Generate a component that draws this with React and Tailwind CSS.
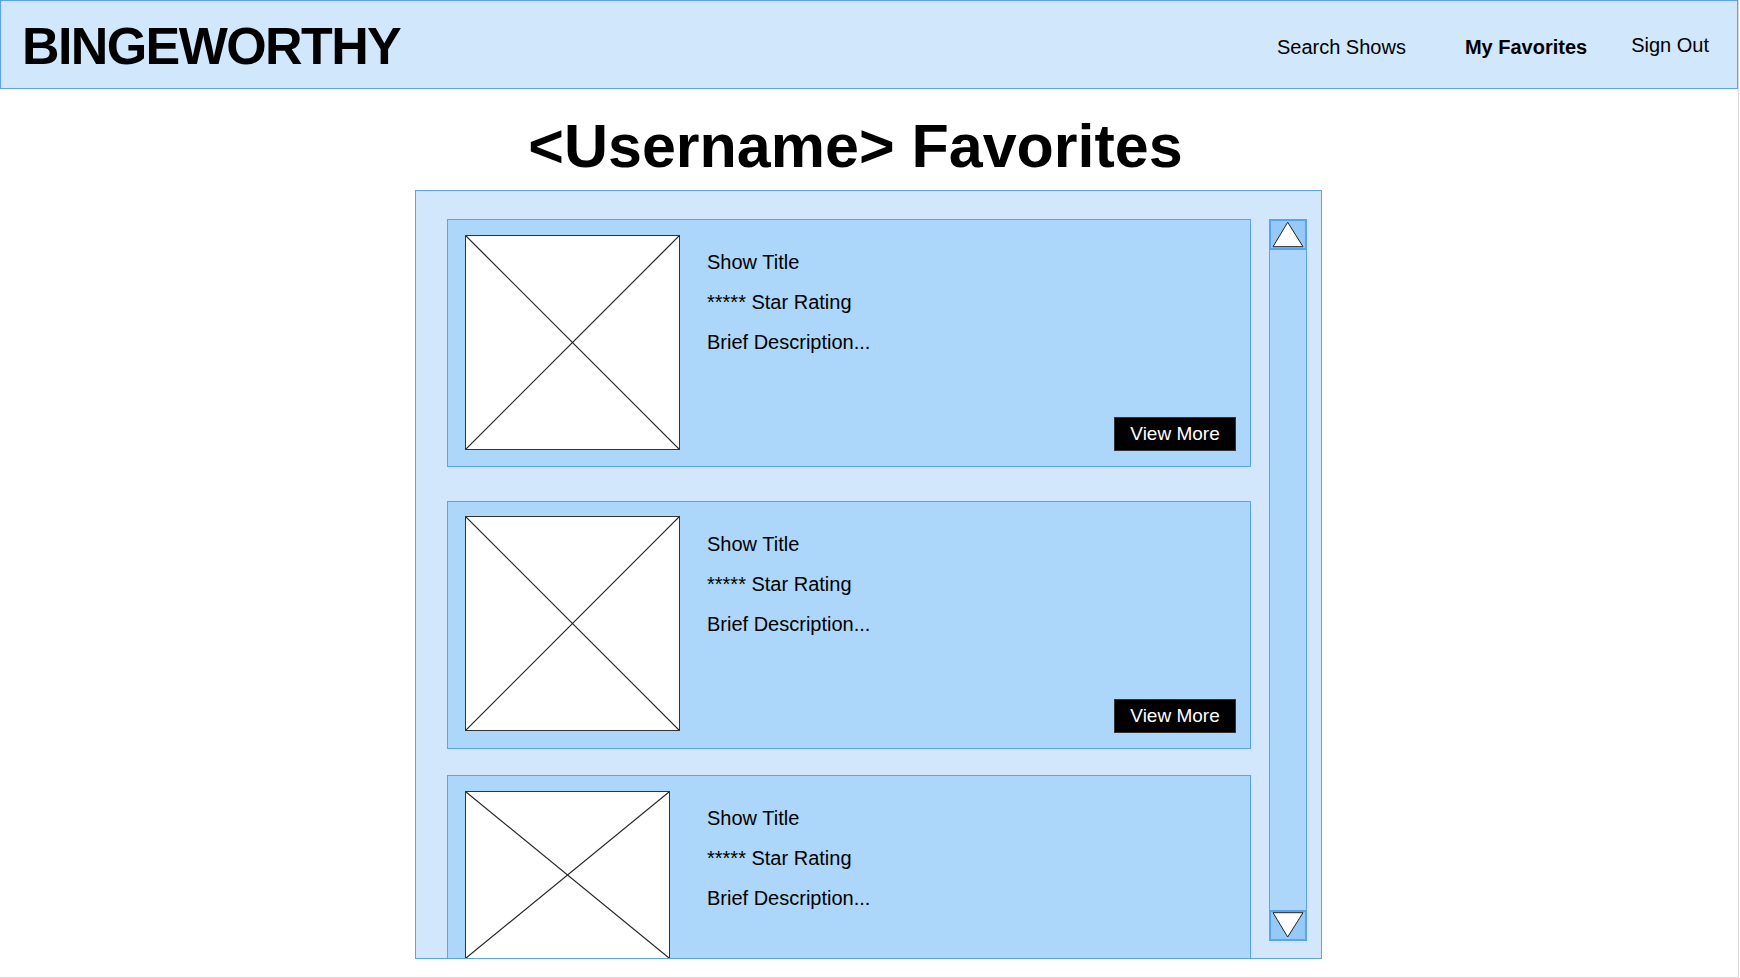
const shows = [
  { id: 1, mt: "mt-0", imgW: "w-[215px]", imgH: "h-[215px]", imgMt: "mt-[15px]", more: true },
  { id: 2, mt: "mt-[34px]", imgW: "w-[215px]", imgH: "h-[215px]", imgMt: "mt-[14px]", more: true },
  { id: 3, mt: "mt-[26px]", imgW: "w-[205px]", imgH: "h-[168px]", imgMt: "mt-[15px]", more: false },
];

const Placeholder = ({ w, h, mt }) => (
  <div className={`relative shrink-0 ${w} ${h} ${mt} border border-[#333] bg-white`}>
    <svg className="absolute inset-0 h-full w-full" preserveAspectRatio="none" viewBox="0 0 100 100">
      <line x1="0" y1="0" x2="100" y2="100" stroke="#222" strokeWidth="1.2" vectorEffect="non-scaling-stroke" />
      <line x1="100" y1="0" x2="0" y2="100" stroke="#222" strokeWidth="1.2" vectorEffect="non-scaling-stroke" />
    </svg>
  </div>
);

const ShowCard = ({ show }) => (
  <div className={`${show.mt} flex h-[248px] w-[804px] shrink-0 border border-[#5aa3f3] bg-[#acd7fa] pl-[17px] pr-[14px] pb-[15px]`}>
    <div className="w-[215px] shrink-0">
      <Placeholder w={show.imgW} h={show.imgH} mt={show.imgMt} />
    </div>
    <div className="flex flex-1 flex-col">
      <div className="ml-[27px] mt-[22px] text-[20px] leading-[40px] text-black">
        <p>Show Title</p>
        <p>***** Star Rating</p>
        <p>Brief Description...</p>
      </div>
      {show.more && (
        <button className="mt-auto self-end h-[34px] w-[122px] border border-[#333] bg-black pb-[2px] text-[19px] leading-none text-white">
          View More
        </button>
      )}
    </div>
  </div>
);

const ScrollButton = ({ down }) => (
  <div className="h-[31px] w-[38px] border-2 border-[#5aa3f3] bg-[#94c9f8]">
    <svg width="34" height="27" viewBox="2 2 34 27">
      {down ? (
        <polygon points="4,2.7 34,2.7 18.7,27" fill="#fff" stroke="#222" strokeWidth="1" />
      ) : (
        <polygon points="18.7,3.3 4,27.7 34,27.7" fill="#fff" stroke="#222" strokeWidth="1" />
      )}
    </svg>
  </div>
);

export default function App() {
  return (
    <div className="h-[978px] w-[1740px] bg-white font-['Liberation_Sans',Arial,sans-serif] text-black">
      <div className="h-[978px] w-[1739px] border-r border-b border-[#d9d9d9]">
        <header className="flex h-[89px] items-start border border-[#5aa3f3] bg-[#d1e7fc]">
          <h1 className="ml-[21px] mt-[19px] text-[52px] font-bold leading-none tracking-[-1.6px]">
            BINGEWORTHY
          </h1>
          <nav className="ml-auto flex items-start text-[20px] leading-none">
            <a className="mr-[59px] mt-[36px]">Search Shows</a>
            <a className="mr-[44px] mt-[36px] font-bold">My Favorites</a>
            <a className="mr-[28px] mt-[34px]">Sign Out</a>
          </nav>
        </header>

        <h2 className="mt-[23px] pr-[27px] text-center text-[61px] font-bold leading-[69px]">
          {"<Username> Favorites"}
        </h2>

        <section className="ml-[415px] mt-[9px] flex h-[769px] w-[907px] overflow-hidden border border-[#5aa3f3] bg-[#d2e7fc] pl-[31px] pr-[14px] pt-[28px]">
          <div className="flex w-[804px] flex-col">
            {shows.map((show) => (
              <ShowCard key={show.id} show={show} />
            ))}
          </div>
          <div className="ml-[18px] flex h-[722px] w-[38px] flex-col justify-between border border-[#5aa3f3] bg-[#acd7fa]">
            <div className="-mx-px -mt-px">
              <ScrollButton />
            </div>
            <div className="-mx-px -mb-px">
              <ScrollButton down />
            </div>
          </div>
        </section>
      </div>
    </div>
  );
}
